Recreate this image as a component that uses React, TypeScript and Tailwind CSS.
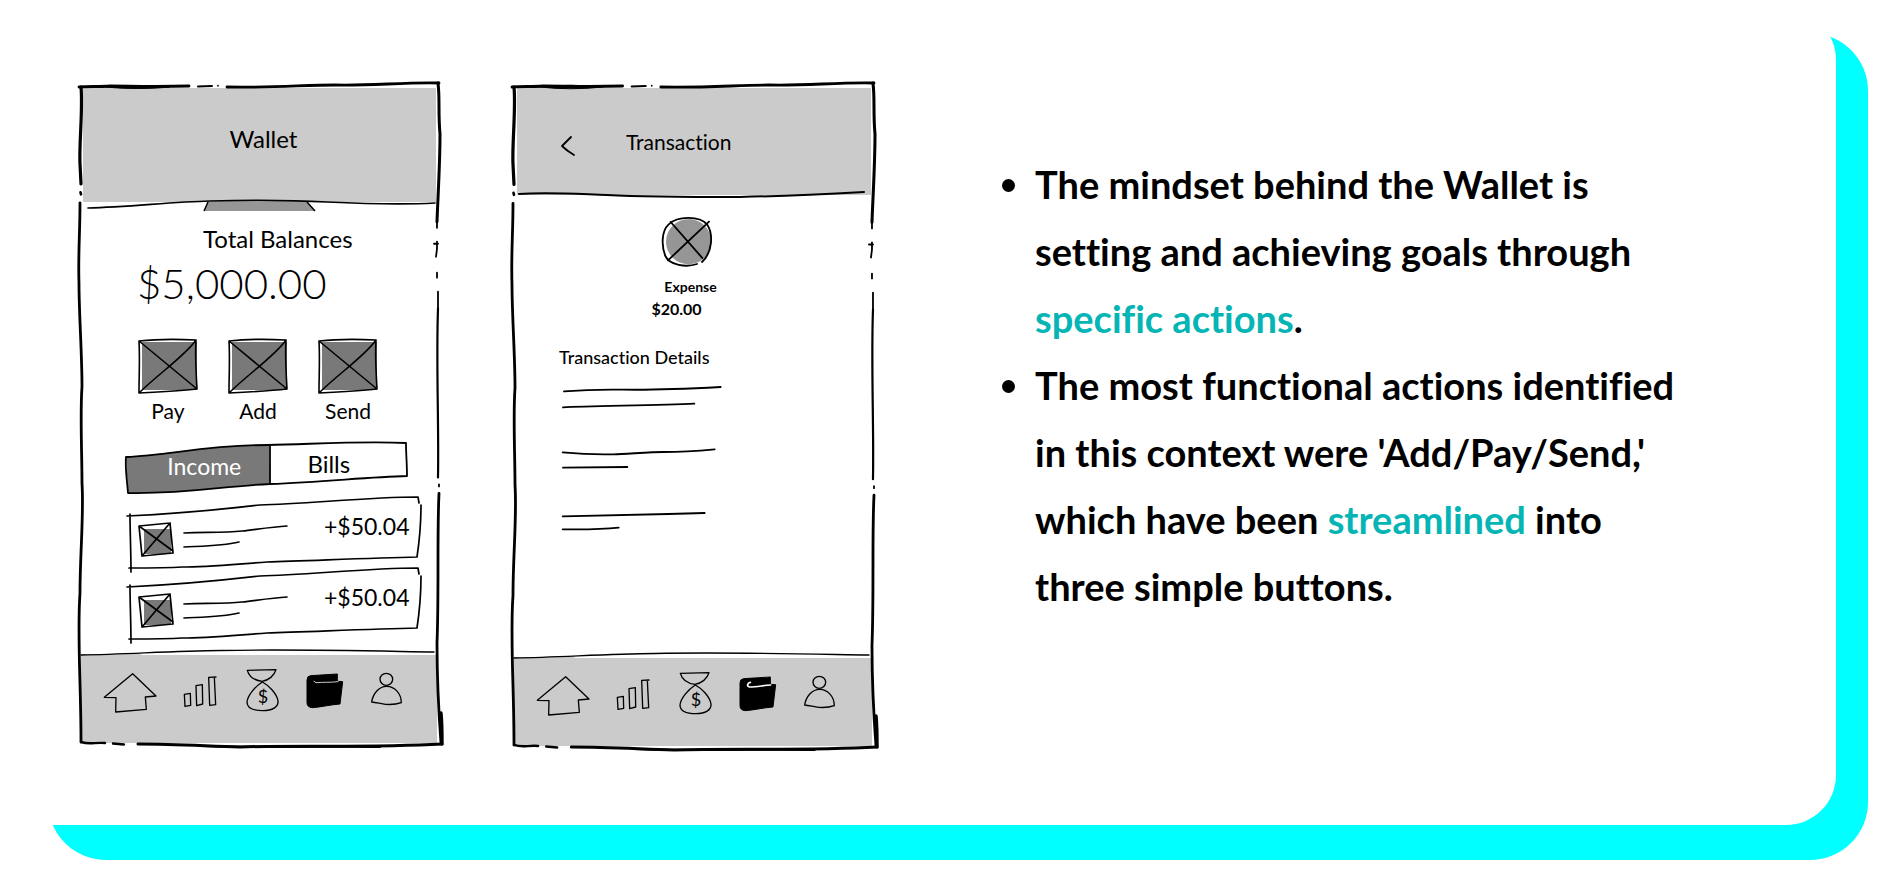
import type { ReactNode } from "react";

const ink = {
  fill: "none",
  stroke: "#000",
  strokeLinecap: "round" as const,
  strokeLinejoin: "round" as const,
};

function Frame() {
  return (
    <svg
      aria-hidden="true"
      className="pointer-events-none absolute inset-0 h-full w-full overflow-visible"
      viewBox="0 0 361 666"
      preserveAspectRatio="none"
      {...ink}
    >
      <g strokeWidth="2.8">
        <path d="M-1 3C10 2 18 3 30 2C50 2 70 3 109 2" />
        <path d="M118 2.5L132 2" strokeWidth="2" />
        <path d="M147 3C190 4 225 1 255 1C290 2 325 -2 359 -1" />
        <path d="M1 3C3 25 -1 60 0 80L1 100" strokeWidth="3.2" />
        <path d="M358 -1C360 15 358 28 360 50C360 80 358 110 357 138" strokeWidth="3" />
        <path d="M0 119C0 150 -2 170 -1 200C-1 230 2 270 2 303C0 330 2 370 2 400C4 430 0 470 0 510C-3 550 1 600 1 659" />
        <path d="M358 225C356 280 359 340 358 394" strokeWidth="2.2" />
        <path d="M359 410C357 450 359 510 357 560C357 590 358 620 361 660" />
      </g>
      <path d="M26 3C45 1 70 1 90 3C70 5 45 5 26 3Z" fill="#000" strokeWidth="1" />
      <path d="M138 1.5V2" strokeWidth="1.6" />
      <path d="M0.5 108.5L1 110.5" strokeWidth="2.6" />
      <path d="M357 136V144M357 158L357 165L356 173M354 160H358M357 189V194M358 208V226M359 401V403" strokeWidth="1.8" />
      <path d="M361 630C362 640 362 652 362 661" strokeWidth="3.4" />
      <path d="M1 659C10 662 15 659 25 660M33 660.5L44 661.5" strokeWidth="2.4" />
      <path d="M58 661C95 661 125 663 160 664C220 662 290 665 362 661" strokeWidth="3" />
      <path d="M120 663C190 665 260 663 300 664" strokeWidth="2" />
    </svg>
  );
}

function Crossed() {
  return (
    <svg aria-hidden="true" className="h-[54px] w-[58px] overflow-visible" viewBox="0 0 58 54" {...ink}>
      <rect x="3" y="3" width="55" height="48" fill="#797979" stroke="none" />
      <path
        d="M0 2C18 0 38 0 57 1C56 17 57 33 58 50C40 52 20 53 0 54C0 37 1 20 0 2L58 50M57 1C47 16 18 36 0 54"
        strokeWidth="1.6"
      />
    </svg>
  );
}

function NavItem({ label, children }: { label: string; children: ReactNode }) {
  return (
    <a href="#" aria-label={label} className="block shrink-0">
      {children}
    </a>
  );
}

function BottomNav({ hook = false }: { hook?: boolean }) {
  return (
    <nav className="relative ml-px mr-1 flex h-[89px] items-start gap-7 bg-[#cbcbcb] pl-[23px] pt-[14px]">
      <svg
        aria-hidden="true"
        className="pointer-events-none absolute -top-1 left-0 h-2 w-full overflow-visible"
        viewBox="0 0 355 8"
        preserveAspectRatio="none"
        {...ink}
      >
        <rect x="60" y="1" width="295" height="4" fill="#fff" stroke="none" />
        <path d="M0 5C50 4 90 1 140 0.5C210 -1 290 1 352 2" strokeWidth="1.4" />
      </svg>
      <NavItem label="Home">
        <svg aria-hidden="true" className="h-[46px] w-[53px] overflow-visible" viewBox="132 413 159 138" {...ink} strokeWidth="4">
          <path d="M218 430L133 501L168 502L167 545L259 537L256 500L288 497Z" />
        </svg>
      </NavItem>
      <NavItem label="Statistics">
        <svg aria-hidden="true" className="h-[46px] w-[33px] overflow-visible" viewBox="374 413 99 138" {...ink} strokeWidth="4">
          <path d="M372 492L390 489L391 525L374 528ZM407 466L426 463L427 521L409 526ZM467 440L445 441L448 525L466 523L462 441" />
        </svg>
      </NavItem>
      <NavItem label="Savings">
        <svg aria-hidden="true" className="h-[46px] w-[33px] overflow-visible" viewBox="557 413 99 138" {...ink} strokeWidth="4">
          <path d="M561 420L647 418C642 436 625 450 605 453C582 450 566 438 561 420Z" />
          <path d="M606 455C585 468 562 495 560 515C560 535 585 541 608 541C635 541 655 530 653 512C650 490 625 465 606 455Z" />
          <text x="608" y="519" textAnchor="middle" fontSize="54" fill="#000" stroke="none" className="font-[Lato]">
            $
          </text>
        </svg>
      </NavItem>
      <NavItem label="Wallet">
        <svg aria-hidden="true" className="h-[46px] w-[37px] overflow-visible" viewBox="741 413 111 138" {...ink} strokeWidth="3">
          <path
            d="M741 448Q741 437 752 436C780 433 805 434 832 431L832 453L848 454L840 521C812 523 785 530 757 532Q741 531 741 518Z"
            fill="#000"
          />
          {hook ? (
            <path d="M772 447C763 448 760 459 770 461C792 461 812 456 833 455" stroke="#fff" strokeWidth="5" />
          ) : (
            <path d="M762 453L768 457C790 455 810 457 834 454" stroke="#cbcbcb" strokeWidth="3" />
          )}
        </svg>
      </NavItem>
      <NavItem label="Profile">
        <svg aria-hidden="true" className="h-[46px] w-[31px] overflow-visible" viewBox="934 413 93 138" {...ink} strokeWidth="4">
          <ellipse cx="977" cy="447" rx="19" ry="18" />
          <path d="M933 515C937 490 955 468 978 468C1002 468 1022 490 1022 517C1005 523 990 523 975 522C960 520 945 516 933 515Z" />
        </svg>
      </NavItem>
    </nav>
  );
}

function IncomeRow() {
  return (
    <li className="relative flex h-[71px] items-start pl-3">
      <svg aria-hidden="true" className="absolute left-0 top-0 h-[75px] w-[294px] overflow-visible" viewBox="0 0 294 75" {...ink} strokeWidth="1.7">
        <path d="M0 19C45 17 90 13 133 8C180 7 240 0 291 0L292 6M294 8C294 28 293 40 290 60C240 61 180 64 140 65C110 67 80 70 55 70C40 71 15 71 2 71M3 17C3 35 4 55 4 75" />
      </svg>
      <svg aria-hidden="true" className="relative mt-[26px] h-[33px] w-[34px] overflow-visible" viewBox="0 0 34 33" {...ink} strokeWidth="1.7">
        <rect x="5" y="6" width="27" height="25" fill="#797979" stroke="none" />
        <path d="M0 3L31 0L34 30L3 33L0 3L34 28M3 33L31 0" />
      </svg>
      <svg aria-hidden="true" className="relative ml-[11px] mt-7 h-6 w-[103px] overflow-visible" viewBox="0 0 103 24" {...ink} strokeWidth="1.7">
        <path d="M0 8C20 7 40 8 58 6C75 4 88 2 103 1M0 22C20 21 38 21 55 17" />
      </svg>
      <span className="relative ml-[37px] mt-[13px] text-[23px] leading-8">+$50.04</span>
    </li>
  );
}

function WalletScreen() {
  return (
    <section className="relative w-[361px] shrink-0 pb-[6px] pt-1">
      <header className="relative ml-[3px] mr-[5px] flex h-[114px] items-center justify-center bg-[#cbcbcb] pb-3 pl-2">
        <h1 className="text-2xl">Wallet</h1>
      </header>
      <svg aria-hidden="true" className="relative block h-[9px] w-full overflow-visible" viewBox="0 0 361 9" {...ink}>
        <path d="M128 0H227L235 9H124Z" fill="#969696" stroke="none" />
        <path d="M128 0L124 9M227 0L235 9" strokeWidth="1.5" strokeLinecap="butt" />
        <path d="M8 6C50 5 90 0 130 -1C170 -2 210 -2 247 0C290 2 320 3 355 1" strokeWidth="1.7" />
      </svg>
      <h2 className="ml-[123px] mt-3 text-2xl leading-8">Total Balances</h2>
      <p className="ml-[57px] mt-1 text-[42px] font-light leading-[48px]">$5,000.00</p>
      <div className="ml-[59px] mt-8 flex gap-8">
        {["Pay", "Add", "Send"].map((action) => (
          <button key={action} type="button" className="flex w-[58px] flex-col items-center gap-[2px] pb-[2px] text-[21px] leading-8">
            <Crossed />
            {action}
          </button>
        ))}
      </div>
      <div className="relative ml-[46px] mr-[34px] mt-[13px] grid h-[51px] grid-cols-2">
        <svg aria-hidden="true" className="absolute inset-0 h-full w-full overflow-visible" viewBox="0 0 281 51" {...ink}>
          <path d="M0 15C50 11 90 4 143 3L144 42C95 44 50 52 2 51Z" fill="#797979" stroke="none" />
          <path
            d="M0 15C45 13 80 3 142 3C190 2 235 -1 280 1C280 12 281 22 281 34C240 35 200 40 144 42C95 44 65 52 2 51C1 38 -1 26 0 15M144 3V42"
            strokeWidth="1.8"
          />
        </svg>
        <button type="button" aria-pressed="true" className="relative pb-1 pl-4 text-[23px] leading-8 text-white">
          Income
        </button>
        <button type="button" aria-pressed="false" className="relative pb-2 pr-4 text-2xl leading-8">
          Bills
        </button>
      </div>
      <ul className="ml-[47px] mt-1">
        <IncomeRow />
        <IncomeRow />
      </ul>
      <div className="mt-[15px]">
        <BottomNav />
      </div>
      <Frame />
    </section>
  );
}

function TransactionScreen() {
  return (
    <section className="relative w-[363px] shrink-0 pb-[6px] pt-1">
      <header className="relative ml-1 mr-[5px] flex h-[107px] items-center bg-[#cbcbcb] pl-[44px] pt-2">
        <button type="button" aria-label="Back">
          <svg aria-hidden="true" className="h-5 w-[13px] overflow-visible" viewBox="0 0 13 20" {...ink} strokeWidth="1.8">
            <path d="M10 1L1 10C4 13 8 16 13 19" />
          </svg>
        </button>
        <h1 className="ml-[52px] pb-2 text-[21px]">Transaction</h1>
        <svg
          aria-hidden="true"
          className="absolute bottom-0 left-0 h-1 w-full overflow-visible"
          viewBox="0 0 354 4"
          {...ink}
        >
          <path d="M2 3C30 1 60 3 90 4C130 6 180 6 223 6C270 5 310 3 347 1" strokeWidth="2" />
        </svg>
      </header>
      <div className="mt-[22px] flex flex-col items-center pr-2">
        <svg aria-hidden="true" className="mr-2 h-[50px] w-[50px] overflow-visible" viewBox="517 443 150 150" {...ink} strokeWidth="5.5">
          <circle cx="597" cy="517" r="68" fill="#969696" stroke="none" />
          <path d="M543 458L638 566M658 457L535 573M622 584C590 595 540 588 527 560C515 530 515 485 537 465C565 438 630 440 652 465C672 495 668 550 637 578" />
        </svg>
        <p className="mt-[10px] text-sm font-bold leading-5">Expense</p>
        <p className="mr-7 text-base font-bold leading-6">$20.00</p>
      </div>
      <h2 className="ml-[46px] mt-[22px] text-lg font-medium leading-7">Transaction Details</h2>
      <svg aria-hidden="true" className="ml-[47px] mt-3 block h-[150px] w-[163px] overflow-visible" viewBox="210 189 489 450" {...ink} strokeWidth="5.5">
        <path d="M222 214C300 208 340 208 400 209S560 208 692 201M219 262C300 258 500 256 613 251" />
        <path d="M218 397C280 403 330 404 370 403S480 396 520 396S620 393 674 388M219 443L412 441" />
        <path d="M218 589C350 587 500 583 644 579M218 628C300 629 340 628 386 623" />
      </svg>
      <div className="mt-[124px]">
        <BottomNav hook />
      </div>
      <Frame />
    </section>
  );
}

function Point({ children }: { children: ReactNode }) {
  return (
    <li className="flex gap-5">
      <span aria-hidden="true" className="mt-7 size-[13px] shrink-0 rounded-full bg-black" />
      <p>{children}</p>
    </li>
  );
}

export default function App() {
  return (
    <main className="grid min-h-screen bg-white font-[Lato,sans-serif] text-black [font-variant-ligatures:none]">
      <div className="col-start-1 row-start-1 mb-[9px] ml-12 mr-[9px] mt-[33px] rounded-[58px] bg-[#00ffff]" />
      <article className="col-start-1 row-start-1 mb-11 mr-[41px] mt-[10px] flex items-start rounded-[50px] bg-white pb-[72px] pl-20 pr-[148px] pt-[74px]">
        <WalletScreen />
        <div className="ml-[72px]">
          <TransactionScreen />
        </div>
        <ul className="ml-[126px] mt-[67px] min-w-0 flex-1 text-[38px] font-bold leading-[67px]">
          <Point>
            The mindset behind the Wallet is setting and achieving goals through{" "}
            <span className="text-[#05b5b5]">specific actions</span>.
          </Point>
          <Point>
            The most functional actions identified in this context were 'Add/Pay/Send,' which have been{" "}
            <span className="text-[#05b5b5]">streamlined</span> into three simple buttons.
          </Point>
        </ul>
      </article>
    </main>
  );
}
